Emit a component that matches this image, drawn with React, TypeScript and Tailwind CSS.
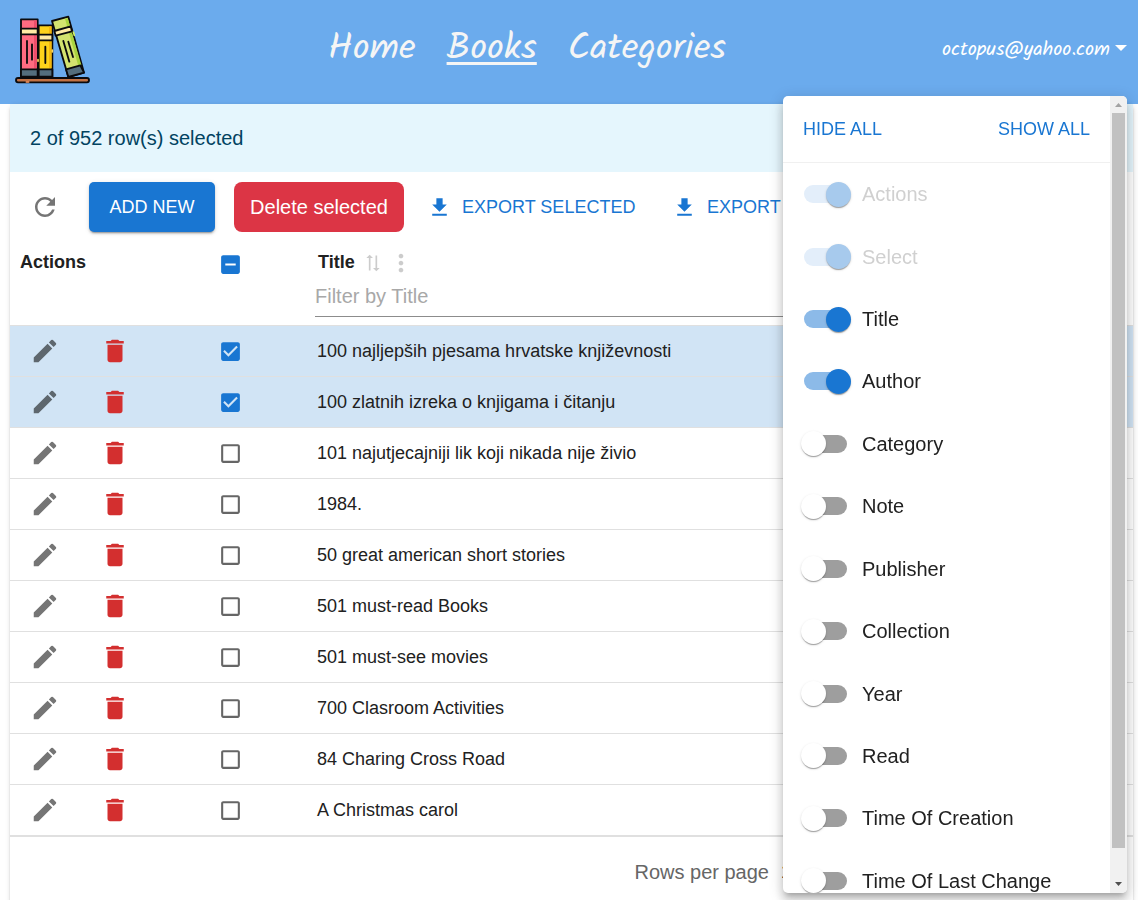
import { useEffect, useRef, useState } from 'react';

const EDIT = 'M3 17.25V21h3.75L17.81 9.94l-3.75-3.75L3 17.25zM20.71 7.04c.39-.39.39-1.02 0-1.41l-2.34-2.34a.9959.9959 0 0 0-1.41 0l-1.83 1.83 3.75 3.75 1.83-1.83z';
const TRASH = 'M6 19c0 1.1.9 2 2 2h8c1.1 0 2-.9 2-2V7H6v12zM19 4h-3.5l-1-1h-5l-1 1H5v2h14V4z';
const REFRESH = 'M17.65 6.35C16.2 4.9 14.21 4 12 4c-4.42 0-7.99 3.58-7.99 8s3.57 8 7.99 8c3.73 0 6.84-2.55 7.73-6h-2.08c-.82 2.33-3.04 4-5.65 4-3.31 0-6-2.69-6-6s2.69-6 6-6c1.66 0 3.14.69 4.22 1.78L13 11h7V4l-2.35 2.35z';
const DOWNLOAD = 'M19 9h-4V3H9v6H5l7 7 7-7zM5 18v2h14v-2H5z';
const SORT = 'M18 12l4-4-4-4v3H3v2h15zM6 12l-4 4 4 4v-3h15v-2H6z';
const MORE = 'M12 8c1.1 0 2-.9 2-2s-.9-2-2-2-2 .9-2 2 .9 2 2 2zm0 2c-1.1 0-2 .9-2 2s.9 2 2 2 2-.9 2-2-.9-2-2-2zm0 6c-1.1 0-2 .9-2 2s.9 2 2 2 2-.9 2-2-.9-2-2-2z';
const BOX = 'M19 5v14H5V5h14m0-2H5c-1.1 0-2 .9-2 2v14c0 1.1.9 2 2 2h14c1.1 0 2-.9 2-2V5c0-1.1-.9-2-2-2z';
const BOX_CHECKED = 'M19 3H5c-1.11 0-2 .9-2 2v14c0 1.1.89 2 2 2h14c1.11 0 2-.9 2-2V5c0-1.1-.89-2-2-2zm-9 14l-5-5 1.41-1.41L10 14.17l7.59-7.59L19 8l-9 9z';
const BOX_MIXED = 'M19 3H5c-1.1 0-2 .9-2 2v14c0 1.1.9 2 2 2h14c1.1 0 2-.9 2-2V5c0-1.1-.9-2-2-2zm-2 10H7v-2h10v2z';

function Icon({ d, className }: { d: string; className: string }) {
  return (
    <svg viewBox="0 0 24 24" fill="currentColor" aria-hidden="true" className={`shrink-0 ${className}`}>
      <path d={d} />
    </svg>
  );
}

function Logo() {
  return (
    <svg viewBox="45 45 225 207" className="h-[69px] w-[75px]" stroke="#0b0b0d" strokeWidth="5.5" strokeLinejoin="round" strokeLinecap="round" aria-hidden="true">
      <path d="M63 58h50v174H63z" fill="#ff6b81" />
      <path d="M102 61h9v144h-9z" fill="#ee4f6c" stroke="none" />
      <path d="M63 86h50v17H63z" fill="#ffeba5" />
      <path d="M63 208h50v22H63z" fill="#546e7d" />
      <path d="M81 123v66M96 133v46" />
      <path d="M116 76h41v154h-41z" fill="#fdd21b" />
      <path d="M147 79h8v126h-8z" fill="#f4b70e" stroke="none" />
      <path d="M116 104h41v17h-41z" fill="#ffeba5" />
      <path d="M116 208h41v22h-41z" fill="#546e7d" />
      <path d="M136 140v49" />
      <path d="M156 63l49-13 47 168-47 13z" fill="#d3e36f" />
      <path d="M195 56l8-2 41 141-9 3z" fill="#a9d33f" stroke="none" />
      <path d="M163 93l49-14 4 15-49 13z" fill="#ffeba5" />
      <path d="M198 208l43-12 11 22-47 13z" fill="#546e7d" />
      <path d="M190 123l18 62M205 125l14 46" />
      <rect x="48" y="234" width="219" height="13" rx="6" fill="#c27245" />
      <path d="M114 179v5M157 150v6" stroke="#ffd95e" strokeWidth="5" />
      <path d="M79 246h7" stroke="#ff9a62" strokeWidth="5" />
      <path d="M220 96l3 10" stroke="#d3f05e" strokeWidth="5" />
    </svg>
  );
}

function Tick({ label, checked, mixed = false, onChange }: { label: string; checked: boolean; mixed?: boolean; onChange: () => void }) {
  const ref = useRef<HTMLInputElement>(null);
  useEffect(() => {
    if (ref.current) ref.current.indeterminate = mixed;
  }, [mixed]);
  const on = checked || mixed;
  return (
    <span className="grid size-[25px]">
      <input ref={ref} type="checkbox" aria-label={label} checked={checked} onChange={onChange} className="col-start-1 row-start-1 size-full cursor-pointer appearance-none" />
      <Icon
        d={mixed ? BOX_MIXED : checked ? BOX_CHECKED : BOX}
        className={`pointer-events-none col-start-1 row-start-1 size-[25px] ${on ? 'text-[#1976d2]' : 'text-[#666666]'}`}
      />
    </span>
  );
}

const BOOKS = [
  '100 najljepših pjesama hrvatske književnosti',
  '100 zlatnih izreka o knjigama i čitanju',
  '101 najutjecajniji lik koji nikada nije živio',
  '1984.',
  '50 great american short stories',
  '501 must-read Books',
  '501 must-see movies',
  '700 Clasroom Activities',
  '84 Charing Cross Road',
  'A Christmas carol',
];

const COLUMNS = ['Actions', 'Select', 'Title', 'Author', 'Category', 'Note', 'Publisher', 'Collection', 'Year', 'Read', 'Time Of Creation', 'Time Of Last Change'];

function ColumnMenu() {
  const [shown, setShown] = useState<string[]>(['Actions', 'Select', 'Title', 'Author']);
  const toggle = (name: string) => setShown(shown.includes(name) ? shown.filter((n) => n !== name) : [...shown, name]);
  return (
    <aside className="fixed top-24 right-[11px] bottom-[7px] flex w-[344px] overflow-hidden rounded-[5px] bg-white shadow-[0_5px_5px_-3px_rgba(0,0,0,0.2),0_8px_10px_1px_rgba(0,0,0,0.14),0_3px_14px_2px_rgba(0,0,0,0.12)]">
      <div className="flex-1 overflow-y-auto [scrollbar-width:none]">
        <div className="flex h-[67px] items-center justify-between border-b border-[#f0f0f0] px-5 text-[18px] text-[#1976d2]">
          <button type="button" onClick={() => setShown(['Actions', 'Select'])}>HIDE ALL</button>
          <button type="button" onClick={() => setShown(COLUMNS)}>SHOW ALL</button>
        </div>
        <div className="grid h-[749px] auto-rows-fr">
          {COLUMNS.map((name) => {
            const locked = name === 'Actions' || name === 'Select';
            return (
              <label key={name} className={`flex items-center gap-[15px] pl-[21px] text-[20px] ${locked ? 'text-[#d0d0d0]' : 'text-[#212121]'}`}>
                <input
                  type="checkbox"
                  role="switch"
                  checked={shown.includes(name)}
                  disabled={locked}
                  onChange={() => toggle(name)}
                  className="flex h-[18px] w-[43px] appearance-none items-center rounded-full bg-[#9e9e9e] before:size-[25px] before:shrink-0 before:-translate-x-[3px] before:rounded-full before:bg-white before:shadow-[0_2px_1px_-1px_rgba(0,0,0,0.2),0_1px_1px_0_rgba(0,0,0,0.14),0_1px_3px_0_rgba(0,0,0,0.12)] checked:bg-[#8cbae8] checked:before:translate-x-[22px] checked:before:bg-[#1976d2] disabled:bg-[#e3eefa] disabled:before:bg-[#a7caed]"
                />
                {name}
              </label>
            );
          })}
        </div>
      </div>
      <div aria-hidden="true" className="flex w-[17px] flex-col items-center bg-[#f1f1f1]">
        <svg viewBox="0 0 17 17" className="size-[17px]"><path d="M5 11l3.5-4 3.5 4z" fill="#a3a3a3" /></svg>
        <div className="w-[13px] flex-1 bg-[#c1c1c1]" />
        <div className="h-[28px]" />
        <svg viewBox="0 0 17 17" className="size-[17px]"><path d="M5 6l3.5 4L12 6z" fill="#505050" /></svg>
      </div>
    </aside>
  );
}

export default function App() {
  const [picked, setPicked] = useState<number[]>([0, 1]);
  const togglePicked = (i: number) => setPicked(picked.includes(i) ? picked.filter((n) => n !== i) : [...picked, i]);
  const all = picked.length === BOOKS.length;

  return (
    <div className="min-h-screen bg-white font-['Liberation_Sans',Arial,sans-serif] text-[#212121]">
      <header className="flex h-[104px] items-center justify-between bg-[#6babed] pr-[11px] pb-[5px] pl-[15px] font-[Kalam,cursive] text-[#f5f5f5]">
        <Logo />
        <nav className="mr-[-22px] flex gap-[31px] text-[37px] leading-[48px]">
          <a href="#home">Home</a>
          <a href="#books" className="underline decoration-[3px] underline-offset-[3px]">Books</a>
          <a href="#categories">Categories</a>
        </nav>
        <button type="button" className="flex items-center gap-[5px] text-[20px] text-white">
          octopus@yahoo.com
          <svg viewBox="0 0 12 6" className="mb-1 h-[6px] w-[12px]" aria-hidden="true"><path d="M0 0h12L6 6z" fill="currentColor" /></svg>
        </button>
      </header>

      <main className="mr-[5px] ml-[10px] overflow-clip rounded-t-[5px] bg-white shadow-[0_3px_1px_-2px_rgba(0,0,0,0.2),0_2px_2px_0_rgba(0,0,0,0.14),0_1px_5px_0_rgba(0,0,0,0.12)] [overflow-clip-margin:8px]">
        <p className="flex h-[68px] items-center bg-[#e5f6fd] px-5 text-[20px] text-[#014361]">{picked.length} of 952 row(s) selected</p>

        <div className="flex h-[70px] items-center overflow-hidden pl-5 text-[18px] whitespace-nowrap">
          <button type="button" aria-label="Refresh" className="mr-[29px] text-[#757575]"><Icon d={REFRESH} className="size-[30px]" /></button>
          <button type="button" className="mr-[19px] h-[50px] w-[126px] shrink-0 rounded-[5px] bg-[#1976d2] text-white shadow-[0_3px_1px_-2px_rgba(0,0,0,0.2),0_2px_2px_0_rgba(0,0,0,0.14),0_1px_5px_0_rgba(0,0,0,0.12)]">ADD NEW</button>
          <button type="button" className="mr-[23px] h-[50px] w-[170px] shrink-0 rounded-[8px] bg-[#dc3545] text-[20px] text-white">Delete selected</button>
          <button type="button" className="mr-[34px] flex w-[211px] shrink-0 items-center gap-[10px] text-[#1976d2]"><Icon d={DOWNLOAD} className="size-[25px]" />EXPORT SELECTED</button>
          <button type="button" className="flex shrink-0 items-center gap-[10px] text-[#1976d2]"><Icon d={DOWNLOAD} className="size-[25px]" />EXPORT</button>
        </div>

        <table className="w-full table-fixed border-collapse text-left">
          <thead>
            <tr className="h-[83px] border-b border-[#e0e0e0] align-top text-[18px]">
              <th className="w-[190px] pt-[7px] pl-[10px] font-bold">Actions</th>
              <th className="w-[105px] pt-[10px] pl-[18px]">
                <Tick label="Select all rows" checked={all} mixed={picked.length > 0 && !all} onChange={() => setPicked(all ? [] : BOOKS.map((_, i) => i))} />
              </th>
              <th className="pt-[7px] pl-[10px] font-bold">
                <div className="flex h-[27px] items-center pl-[3px]">
                  Title
                  <button type="button" aria-label="Sort by Title" className="ml-2 text-[#cccccc]"><Icon d={SORT} className="size-5 rotate-90" /></button>
                  <button type="button" aria-label="Column actions" className="ml-1 text-[#cccccc]"><Icon d={MORE} className="size-[28px]" /></button>
                </div>
                <input type="text" aria-label="Filter by Title" placeholder="Filter by Title" className="mt-px block h-10 w-full max-w-[560px] border-b border-[#8c8c8c] text-[20px] font-normal outline-none placeholder:text-[#a8a8a8]" />
              </th>
            </tr>
          </thead>
          <tbody>
            {BOOKS.map((title, i) => (
              <tr key={title} className={`h-[51px] border-b border-[#e0e0e0] ${picked.includes(i) ? 'bg-[#d1e4f5]' : 'bg-white'}`}>
                <td className="pl-5">
                  <div className="flex gap-10">
                    <button type="button" aria-label={`Edit ${title}`} className={picked.includes(i) ? 'text-[#5e676e]' : 'text-[#757575]'}><Icon d={EDIT} className="size-[30px]" /></button>
                    <button type="button" aria-label={`Delete ${title}`} className="text-[#d32f2f]"><Icon d={TRASH} className="size-[30px]" /></button>
                  </div>
                </td>
                <td className="pt-[2px] pl-[18px]"><Tick label={`Select ${title}`} checked={picked.includes(i)} onChange={() => togglePicked(i)} /></td>
                <td className="truncate pt-[2px] pl-3 text-[18px]">{title}</td>
              </tr>
            ))}
          </tbody>
        </table>

        <footer className="flex h-[72px] items-center justify-end gap-3 border-t border-[#e0e0e0] pr-[284px] text-[20px] text-[#666666]">
          <label htmlFor="page-size">Rows per page</label>
          <select id="page-size" className="w-[68px] appearance-none text-[18px] text-[#212121] outline-none"><option>10</option></select>
        </footer>
      </main>

      <ColumnMenu />
    </div>
  );
}
